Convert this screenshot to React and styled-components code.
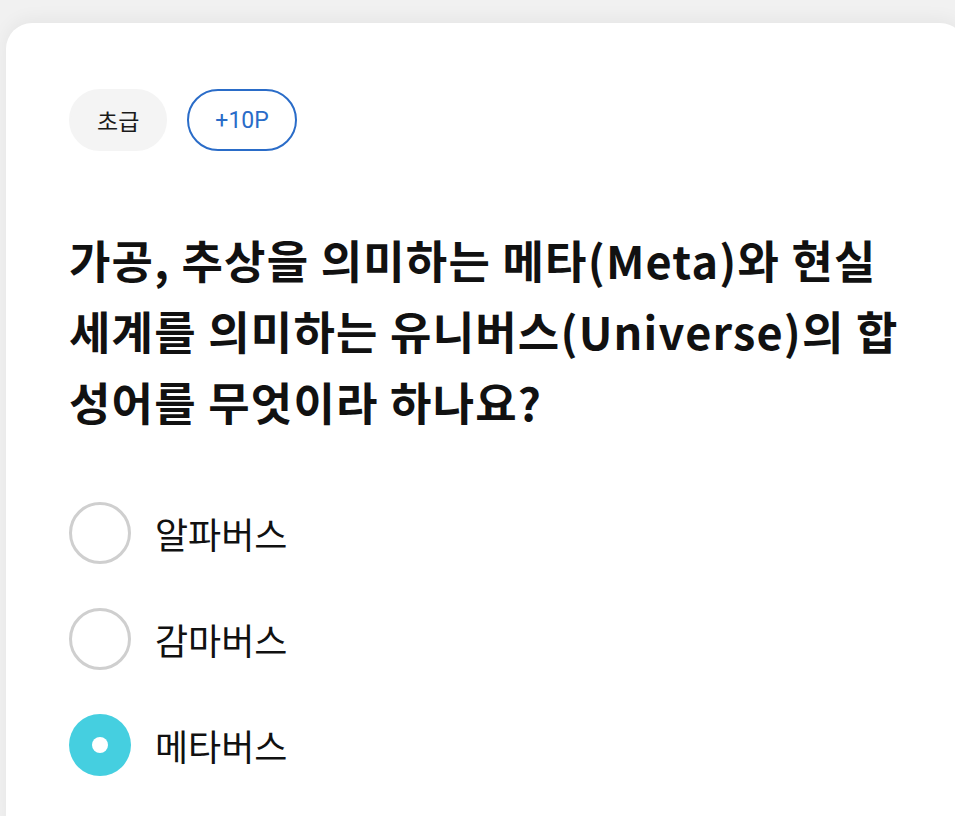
import styled, { createGlobalStyle } from 'styled-components';

const GlobalStyle = createGlobalStyle`
  html, body {
    margin: 0;
    padding: 0;
    background: #f1f1f1;
    overflow: hidden;
  }
  body {
    font-family: "Noto Sans CJK KR", "Noto Sans", sans-serif;
    color: #111;
  }
`;

const Page = styled.div`
  width: 955px;
  height: 816px;
  padding: 23px 0 0 6px;
  box-sizing: border-box;
`;

const Card = styled.section`
  width: 960px;
  min-height: 820px;
  box-sizing: border-box;
  background: #fff;
  border-radius: 26px;
  box-shadow: 0 -4px 18px rgba(0, 0, 0, 0.05);
  padding: 66px 40px 0 63px;
`;

const Tags = styled.div`
  display: flex;
  gap: 20px;
`;

const Tag = styled.span`
  display: inline-flex;
  align-items: center;
  justify-content: center;
  height: 62px;
  box-sizing: border-box;
  padding: 0 26px;
  border-radius: 31px;
  font-family: Roboto, "Noto Sans CJK KR", sans-serif;
  font-size: 23px;
  background: ${({ $outline }) => ($outline ? '#fff' : '#f4f4f4')};
  color: ${({ $outline }) => ($outline ? '#2a6cc8' : '#1a1a1a')};
  border: 2px solid ${({ $outline }) => ($outline ? '#2a6cc8' : '#f4f4f4')};
`;

const Question = styled.h1`
  margin: 73px 0 0;
  max-width: 850px;
  font-size: 45px;
  font-weight: 700;
  line-height: 71px;
  letter-spacing: 1.2px;
  color: #111;
`;

const Options = styled.ul`
  list-style: none;
  margin: 65px 0 0;
  padding: 0;
  display: flex;
  flex-direction: column;
  gap: 44px;
`;

const Option = styled.li`
  display: flex;
  align-items: center;
  gap: 24px;
  height: 62px;
  font-size: 36px;
  color: #111;
`;

const Radio = styled.span`
  width: 62px;
  height: 62px;
  box-sizing: border-box;
  border-radius: 50%;
  flex-shrink: 0;
  display: flex;
  align-items: center;
  justify-content: center;
  border: ${({ $checked }) => ($checked ? 'none' : '3px solid #cfcfcf')};
  background: ${({ $checked }) => ($checked ? '#45cfe0' : '#fff')};

  &::after {
    content: '';
    display: ${({ $checked }) => ($checked ? 'block' : 'none')};
    width: 16px;
    height: 16px;
    border-radius: 50%;
    background: #fff;
  }
`;

const options = [
  { label: '알파버스', checked: false },
  { label: '감마버스', checked: false },
  { label: '메타버스', checked: true },
];

export default function App() {
  return (
    <Page>
      <GlobalStyle />
      <Card>
        <Tags>
          <Tag>초급</Tag>
          <Tag $outline>+10P</Tag>
        </Tags>
        <Question>
          가공, 추상을 의미하는 메타(Meta)와 현실 세계를 의미하는 유니버스(Universe)의 합성어를 무엇이라 하나요?
        </Question>
        <Options>
          {options.map((o) => (
            <Option key={o.label}>
              <Radio $checked={o.checked} />
              {o.label}
            </Option>
          ))}
        </Options>
      </Card>
    </Page>
  );
}
